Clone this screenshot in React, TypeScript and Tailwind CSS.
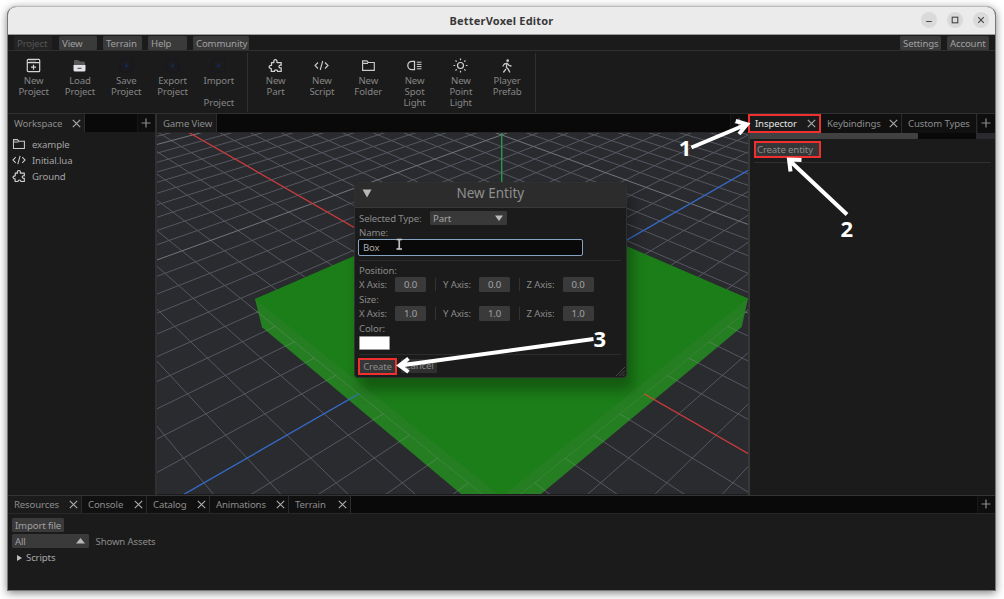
import React from "react";
import { TbWalk } from "react-icons/tb";

const K = -0.0291;
const project = (a: number, b: number): [number, number] => {
  const w = 1 + K * (a + b);
  return [501.5 + (24.4 * (a - b)) / w, (312 + 4.93 * (a + b)) / w];
};

const seg = (a1: number, b1: number, a2: number, b2: number) => {
  const [x1, y1] = project(a1, b1);
  const [x2, y2] = project(a2, b2);
  return `M${x1.toFixed(2)} ${y1.toFixed(2)}L${x2.toFixed(2)} ${y2.toFixed(2)}`;
};

const minor: string[] = [];
const major: string[] = [];
for (let n = -70; n <= 18; n++) {
  if (n === 0) continue;
  const far = -70;
  const near = Math.min(30 - n, 70);
  const target = n % 10 === 0 ? major : minor;
  target.push(seg(n, far, n, near), seg(far, n, near, n));
}
const MINOR = minor.join("");
const MAJOR = major.join("");

function Scene() {
  return (
    <svg className="block h-[361px] w-[592px]" viewBox="157 133 592 361" preserveAspectRatio="none">
      <defs>
        <clipPath id="skirt">
          <path d="M256 310L483 494.500L461 494L262 327.300Z M748 310L520 494.500L541 494L742 327Z" />
        </clipPath>
      </defs>
      <rect x="157" y="133" width="592" height="361" fill="#2a2b2f" />
      <g fill="none">
        <path d={MINOR} stroke="#565762" strokeWidth="1" />
        <path d={MAJOR} stroke="#74757d" strokeWidth="1" />
        <path d={seg(-40, 0, 25, 0)} stroke="#c93b3e" strokeWidth="1.3" />
        <path d={seg(0, -40, 0, 25)} stroke="#356bc9" strokeWidth="1.3" />
        <path d="M501.700 133V190" stroke="#239a4c" strokeWidth="1.4" />
      </g>
      <path d="M255 299L262 327.300L461 494H541L741.700 327L748 298.500L501.500 200Z" fill="#257f22" />
      <path d="M255 299L501.500 192L748 298.500L505 494H498Z" fill="#1c7e18" />
      <g clipPath="url(#skirt)" fill="none">
        <path d={MINOR} stroke="#4f874f" strokeWidth="0.9" />
        <path d={seg(-40, 0, 25, 0)} stroke="#c4502f" strokeWidth="1.3" />
        <path d={seg(0, -40, 0, 25)} stroke="#3272b8" strokeWidth="1.3" />
      </g>
    </svg>
  );
}

type IconProps = { className?: string };

const Puzzle = ({ className = "size-[15px]" }: IconProps) => (
  <svg className={className} viewBox="0 0 15 15" fill="none" stroke="#d0d0d0" strokeWidth="1.25" strokeLinejoin="round">
    <path d="M3.500 4.500H5.900C4.800 .600 9.900 .600 8.900 4.500H13.200V7.300C10.200 6.700 10.200 10.400 13.200 9.900V13.400H9.600C9.600 11.200 6.400 11.200 6.400 13.400H3.300V10.500C.500 10.600 .300 7.300 3.500 7.300Z" />
  </svg>
);
const Code = ({ className = "size-[15px]" }: IconProps) => (
  <svg className={className} viewBox="0 0 15 15" fill="none" stroke="#c8c8c8" strokeWidth="1.150">
    <path d="M4 4.500L1 7.500L4 10.500M11 4.500L14 7.500L11 10.500M8.700 3L6.200 12" />
  </svg>
);
const Folder = ({ className = "size-[15px]" }: IconProps) => (
  <svg className={className} viewBox="0 0 15 15" fill="none" stroke="#c8c8c8" strokeWidth="1.150">
    <path d="M1.600 12.300V2.800H5.800L7.300 4.500H13.300V12.300ZM1.600 5.300H7" />
  </svg>
);
const NewWindow = () => (
  <svg className="size-[15px]" viewBox="0 0 15 15" fill="none" stroke="#d4d4d4" strokeWidth="1.200">
    <rect x="1.300" y="1.300" width="12.400" height="12.400" rx="1" />
    <path d="M1.300 4.600H13.700M7.500 6.700V11.700M5 9.200H10" />
    <path d="M3 3H10" strokeWidth=".8" opacity=".6" />
  </svg>
);
const Load = () => (
  <svg className="size-[15px]" viewBox="0 0 15 15">
    <path d="M2 7V3Q2 2 3 2H6L8 3.500H11.500Q13 3.500 13 5V8H2Z" fill="#58595b" />
    <path d="M1.500 7H13.500V12Q13.500 13.600 12 13.600H3Q1.500 13.600 1.500 12Z" fill="#e2e2e6" />
    <rect x="5.500" y="9.800" width="4" height="1.100" fill="#555" />
  </svg>
);
const Save = () => (
  <svg className="size-[15px]" viewBox="0 0 15 15" fill="none">
    <rect x="1.200" y="1.200" width="12.600" height="12.600" rx="3" stroke="#161824" />
    <path d="M7.500 5V8M5.800 7.300L7.500 9L9.200 7.300" stroke="#172553" strokeWidth="1.300" />
  </svg>
);
const Lamp = () => (
  <svg className="size-[15px]" viewBox="0 0 15 15" fill="none" stroke="#d0d0d0" strokeWidth="1.250">
    <path d="M7.500 3.300H5A4.200 4.200 0 0 0 5 11.700H7.500Z" />
    <path d="M9.800 4.200H14.500M9.800 6.400H14.500M9.800 8.600H14.500M9.800 10.800H14.500" strokeWidth="1" />
  </svg>
);
const Sun = () => (
  <svg className="size-[15px]" viewBox="0 0 15 15" fill="none" stroke="#d0d0d0" strokeWidth="1.200">
    <circle cx="7.500" cy="7.500" r="3" />
    <path d="M7.500 .5V2.200M7.500 12.800V14.500M.5 7.500H2.200M12.800 7.500H14.500M2.500 2.500L3.700 3.700M11.300 11.300L12.500 12.500M2.500 12.500L3.700 11.300M11.300 3.700L12.500 2.500" />
  </svg>
);
const Close = () => (
  <svg className="size-[9px] shrink-0" viewBox="0 0 9 9" fill="none" stroke="#aaaaaa" strokeWidth="1.150">
    <path d="M.8 .8L8.200 8.200M8.200 .8L.8 8.200" />
  </svg>
);
const Plus = () => (
  <div className="flex h-full w-[18px] shrink-0 items-center justify-center border-l border-[#161616] bg-[#0e0e0e] pr-px pb-px">
    <svg className="size-[10px]" viewBox="0 0 10 10" stroke="#8c8c8c" strokeWidth="1.200">
      <path d="M5 .5V9.500M.5 5H9.500" />
    </svg>
  </div>
);

function Tool({ icon, lines }: { icon: React.ReactNode; lines: string[] }) {
  return (
    <div className="flex w-[46.3px] shrink-0 flex-col items-center pt-[7px]">
      <div className="flex h-[15px] items-center justify-center">{icon}</div>
      <div className="mt-[3px] flex flex-col items-center text-[#858585]">
        {lines.map((l, i) => (
          <span key={i} className="h-[10.800px] leading-[10.800px] whitespace-pre">{l}</span>
        ))}
      </div>
    </div>
  );
}

function Tab({ label, className, close = true }: { label: string; className: string; close?: boolean }) {
  return (
    <div className={`flex h-full shrink-0 items-center justify-between border-r border-[#2b2b2b] pr-[3px] pl-[6px] ${className}`}>
      <span>{label}</span>
      {close && <Close />}
    </div>
  );
}

function AxisRow({ value }: { value: string }) {
  return (
    <div className="flex h-[14.500px] items-center">
      {["X", "Y", "Z"].map((axis, i) => (
        <div key={axis} className={i === 0 ? "flex w-[84px] items-center" : "flex w-[83.500px] items-center"}>
          <span className="w-[36px]">{axis} Axis:</span>
          <span className="flex h-[14.500px] w-[31px] items-center justify-center rounded-[1.500px] bg-[#3a3a3a] text-[#a4a4a4]">{value}</span>
          {i < 2 && <span className="ml-[9px] h-[13px] w-px bg-[#333]" />}
        </div>
      ))}
    </div>
  );
}

function Dialog() {
  return (
    <div className="absolute top-[182px] left-[354px] flex h-[196px] w-[272.500px] flex-col overflow-hidden rounded-[4px] border border-[#303030] bg-[#1b1b1b] text-[#8a8a8a] shadow-[6px_12px_14px_rgba(0,0,0,0.3)]">
      <div className="flex h-[25px] shrink-0 items-center border-b border-[#383838] bg-[#2c2c2c]">
        <svg className="mt-[-3px] ml-[7px] h-[9px] w-[10px]" viewBox="0 0 10 9"><path d="M.5 .5H9.500L5 8.500Z" fill="#b8b8b8" /></svg>
        <span className="ml-[84.500px] h-[23px] text-[13.500px] leading-[19px] tracking-[0] text-[#8f8f8f]">New Entity</span>
      </div>
      <div className="relative flex flex-1 flex-col pl-[4px]">
        <div className="mt-[3px] flex h-[14px] items-center">
          <span className="w-[71px]">Selected Type:</span>
          <span className="flex h-[14px] w-[77px] items-center justify-between rounded-[1.500px] bg-[#393939] px-[3px] text-[#a4a4a4]">
            Part
            <svg className="mr-[1px] h-[6px] w-[8px]" viewBox="0 0 8 6"><path d="M0 .5H8L4 6Z" fill="#bbb" /></svg>
          </span>
        </div>
        <span className="h-[14px] leading-[16px]">Name:</span>
        <div className="ml-[-1px] flex h-[17px] w-[225px] items-center rounded-[2px] border border-[#84a4c4] bg-[#090909] pb-px pl-[4px] text-[#a8a8a8]">Box</div>
        <div className="mt-[3.500px] h-px w-[262px] bg-[#2c2c2c]" />
        <span className="mt-[3px] mb-[0.500px] h-[13px] leading-[13px]">Position:</span>
        <AxisRow value="0.0" />
        <span className="h-[14.500px] leading-[15px]">Size:</span>
        <AxisRow value="1.0" />
        <span className="h-[15px] leading-[15px]">Color:</span>
        <div className="h-[14px] w-[31px] rounded-[1px] border border-[#999] bg-white" />
        <div className="mt-[4.500px] h-px w-[262px] bg-[#2c2c2c]" />
        <div className="mt-[2.500px] flex gap-[4px]">
          <div className="ml-[-1px] flex h-[17px] w-[39px] items-center justify-center border-2 border-[#f0302f] bg-[#363636]">Create</div>
          <div className="mt-[1px] flex h-[14px] w-[36px] items-center justify-center rounded-[1.500px] bg-[#303030]">Cancel</div>
        </div>
        <svg className="absolute right-[1px] bottom-[1px] size-[9px]" viewBox="0 0 9 9" stroke="#555" strokeWidth=".8"><path d="M0 9L9 0M3.500 9L9 3.500M6.500 9L9 6.500" /></svg>
      </div>
    </div>
  );
}

function Annotations() {
  return (
    <svg className="pointer-events-none absolute inset-0 h-[599px] w-[1004px]" viewBox="0 0 1004 599">
      <g fill="none" stroke="#fff" strokeWidth="4" strokeLinejoin="miter">
        <path d="M691.500 147.500L745 125M735.700 121L747 124.300L739 134" />
        <path d="M847 214.500L790 161M801.500 160L789 159.500L790.500 171.500" />
        <path d="M593.500 339L400 365.500M408.500 358.500L399.500 365.500L408.500 372" />
      </g>
      <g stroke="#242424" strokeWidth="2.600" fill="none"><path d="M396.500 239.500H402M399.200 240V249M396.500 249H402" /></g>
      <g stroke="#ccc" strokeWidth="1.400" fill="none"><path d="M396.500 239.500H402M399.200 240V249M396.500 249H402" /></g>
      <g fill="#fff" fontFamily="Open Sans, sans-serif" fontWeight="700" fontSize="22" letterSpacing="0" textAnchor="middle">
        <text x="685" y="155.500">1</text>
        <text x="846.700" y="236.500">2</text>
        <text x="599.800" y="346.500">3</text>
      </g>
    </svg>
  );
}

function WinButton({ children }: { children: React.ReactNode }) {
  return (
    <div className="flex size-[16px] items-center justify-center rounded-full bg-[#dadada]">
      <svg className="size-[8px]" viewBox="0 0 8 8" fill="none" stroke="#444" strokeWidth="1.100">{children}</svg>
    </div>
  );
}

const menu = "flex h-[14px] items-center rounded-[1.500px] bg-[#3a3a3a] px-[3px] text-[#a0a0a0]";

export default function App() {
  return (
    <div className="relative h-[599px] w-[1004px] overflow-hidden bg-white pt-[6px] pl-[7px] font-['Noto_Sans',sans-serif] text-[9.600px] leading-[13px] tracking-[-0.130px] whitespace-nowrap text-[#8c8c8c]">
      <div className="flex h-[585px] w-[989px] flex-col overflow-hidden rounded-t-[9px] border border-[#777] border-t-[#bbb] bg-[#1b1b1b] shadow-[0_2px_9px_rgba(0,0,0,0.5)]">
        <header className="relative flex h-[28px] shrink-0 items-center justify-center border-b border-[#9b9b9b] bg-[#ebebeb]">
          <span className="text-[11px] font-bold tracking-[0.200px] text-[#383838]">BetterVoxel Editor</span>
          <div className="absolute right-[6px] flex gap-[10.200px] pb-px">
            <WinButton><path d="M1.200 5.500H6.800" /></WinButton>
            <WinButton><rect x="1.200" y="1.200" width="5.600" height="5.600" /></WinButton>
            <WinButton><path d="M1.200 1.200L6.800 6.800M6.800 1.200L1.200 6.800" /></WinButton>
          </div>
        </header>
        <nav className="flex h-[16px] shrink-0 items-center border-b border-[#303030] pt-px pl-[6px]">
          <span className="flex h-[14px] w-[38px] items-center rounded-[1.500px] bg-[#242424] pl-[3px] text-[#555]">Project</span>
          <span className={`${menu} ml-[7px] w-[38px]`}>View</span>
          <span className={`${menu} ml-[6px] w-[39px]`}>Terrain</span>
          <span className={`${menu} ml-[6px] w-[39px]`}>Help</span>
          <span className={`${menu} ml-[6px] w-[56px]`}>Community</span>
          <span className={`${menu} ml-auto w-[41px]`}>Settings</span>
          <span className={`${menu} mr-[6px] ml-[6px] w-[42px]`}>Account</span>
        </nav>
        <section className="flex h-[63px] shrink-0 border-b border-[#303030] pl-[2.500px]">
          <Tool icon={<NewWindow />} lines={["New", "Project"]} />
          <Tool icon={<Load />} lines={["Load", "Project"]} />
          <Tool icon={<Save />} lines={["Save", "Project"]} />
          <Tool icon={<Save />} lines={["Export", "Project"]} />
          <Tool icon={<Save />} lines={["Import", " ", "Project"]} />
          <div className="mt-[2px] mr-[4.500px] ml-[5px] h-[59px] w-px bg-[#303030]" />
          <Tool icon={<Puzzle />} lines={["New", "Part"]} />
          <Tool icon={<Code />} lines={["New", "Script"]} />
          <Tool icon={<Folder />} lines={["New", "Folder"]} />
          <Tool icon={<Lamp />} lines={["New", "Spot", "Light"]} />
          <Tool icon={<Sun />} lines={["New", "Point", "Light"]} />
          <Tool icon={<TbWalk className="size-[16px] text-[#c8c8c8]" />} lines={["Player", "Prefab"]} />
          <div className="mt-[2px] ml-[5px] h-[59px] w-px bg-[#303030]" />
        </section>
        <main className="flex h-[381px] shrink-0">
          <aside className="flex w-[147px] shrink-0 flex-col">
            <div className="flex h-[18px] shrink-0 justify-between bg-[#090909]">
              <Tab label="Workspace" className="w-[77px] bg-[#1b1b1b]" />
              <Plus />
            </div>
            <div className="flex flex-col pt-[4px] pl-[4px] text-[#a2a2a2]">
              <div className="flex h-[16.200px] items-center gap-[6px]"><Folder className="size-[14px]" />example</div>
              <div className="flex h-[16.200px] items-center gap-[6px]"><Code className="size-[14px]" />Initial.lua</div>
              <div className="flex h-[16.200px] items-center gap-[6px]"><Puzzle className="size-[14px]" />Ground</div>
            </div>
          </aside>
          <div className="w-[2px] shrink-0 bg-[#303030]" />
          <section className="flex w-[591px] shrink-0 flex-col overflow-hidden">
            <div className="flex h-[19px] shrink-0 justify-between border-b border-[#262626] bg-[#090909]">
              <Tab label="Game View" className="w-[60px] bg-[#1b1b1b]" close={false} />
              <Plus />
            </div>
            <Scene />
          </section>
          <div className="w-[2px] shrink-0 bg-[#383838]" />
          <aside className="flex min-w-0 flex-1 flex-col">
            <div className="flex h-[19px] shrink-0 bg-[#090909]">
              <div className="ml-[-2px] flex h-[19px] w-[73px] shrink-0 items-center justify-between border-2 border-[#f0302f] bg-[#1b1b1b] pr-[3px] pl-[5px] text-[#e4e4e4]">
                Inspector<Close />
              </div>
              <Tab label="Keybindings" className="w-[81px] bg-[#101010]" />
              <Tab label="Custom Types" className="w-[75px] bg-[#101010]" close={false} />
              <Plus />
            </div>
            <div className="flex h-[6px] shrink-0 bg-[#2a2b2f]">
              <div className="h-full w-[168px] rounded-r-[2px] bg-[#414141]" />
              <div className="h-full w-[58px] bg-[#090909]" />
            </div>
            <div className="flex flex-col pt-[2px] pl-[4px]">
              <div className="flex h-[17px] w-[67px] items-center border-2 border-[#f0302f] bg-[#363636] pl-[1px]">Create entity</div>
              <div className="mt-[4px] h-px w-[237px] bg-[#303030]" />
            </div>
          </aside>
        </main>
        <footer className="flex flex-1 flex-col border-t-[1.500px] border-[#343434]">
          <div className="flex h-[18px] shrink-0 border-b border-[#282828] bg-[#090909]">
            <Tab label="Resources" className="w-[74px] bg-[#1b1b1b]" />
            <Tab label="Console" className="w-[65px] bg-[#101010]" />
            <Tab label="Catalog" className="w-[63px] bg-[#101010]" />
            <Tab label="Animations" className="w-[79px] bg-[#101010]" />
            <Tab label="Terrain" className="w-[62px] bg-[#101010]" />
            <div className="ml-auto"><Plus /></div>
          </div>
          <div className="flex flex-col pt-[4px] pl-[4px]">
            <span className="flex h-[14px] w-[52px] items-center rounded-[1.500px] bg-[#3a3a3a] pl-[3px] text-[#a0a0a0]">Import file</span>
            <div className="mt-[2px] flex h-[14px] items-center">
              <span className="flex h-[14px] w-[77px] items-center justify-between rounded-[1.500px] bg-[#3a3a3a] pr-[4px] pl-[3px] text-[#a0a0a0]">
                All<svg className="h-[6px] w-[9px]" viewBox="0 0 9 6"><path d="M0 5.500H9L4.500 0Z" fill="#b8b8b8" /></svg>
              </span>
              <span className="ml-[6.500px]">Shown Assets</span>
            </div>
            <div className="mt-[2px] flex h-[15px] items-center pl-[5px] text-[#a8a8a8]">
              <svg className="mr-[4px] h-[6px] w-[5px]" viewBox="0 0 5 6"><path d="M0 0L5 3L0 6Z" fill="#c0c0c0" /></svg>Scripts
            </div>
          </div>
        </footer>
      </div>
      <Dialog />
      <Annotations />
    </div>
  );
}
